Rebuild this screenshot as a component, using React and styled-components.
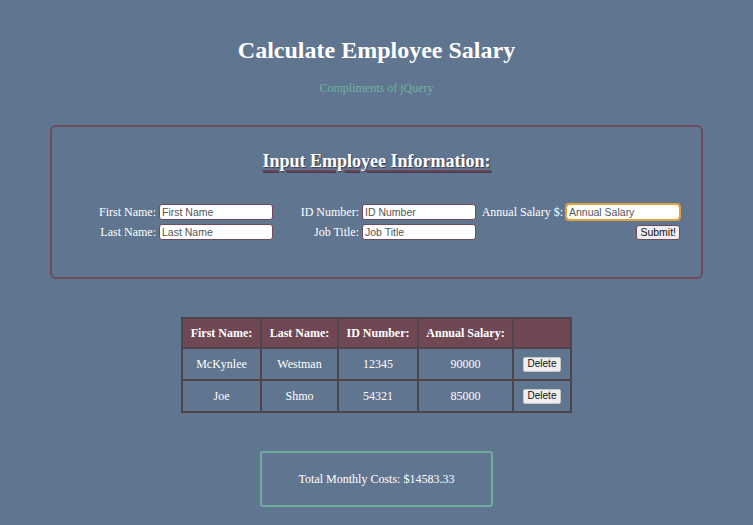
import { useState } from "react";
import styled, { createGlobalStyle } from "styled-components";

const GlobalStyle = createGlobalStyle`
  html, body {
    margin: 0;
    padding: 0;
    background: #5f7590;
  }
  body {
    font-family: "Liberation Serif", "Times New Roman", serif;
    color: #ffffff;
  }
`;

const Page = styled.div`
  width: 753px;
  min-height: 525px;
  padding-top: 36px;
  box-sizing: border-box;
`;

const Title = styled.h1`
  margin: 0;
  text-align: center;
  font-size: 24px;
  line-height: 28px;
  font-weight: bold;
`;

const Subtitle = styled.p`
  margin: 17px 0 0;
  text-align: center;
  font-size: 12px;
  color: #6fb3a1;
`;

const InputBox = styled.div`
  margin: 29px 50px 0;
  height: 154px;
  border: 2px solid #6d4b5d;
  border-radius: 6px;
  box-sizing: border-box;
  padding: 22px 20px 0 43px;
`;

const BoxHeading = styled.h3`
  margin: 0 0 0 -23px;
  text-align: center;
  font-size: 18px;
  line-height: 24px;
  text-decoration: underline;
  text-decoration-color: #6d4355;
  text-decoration-thickness: 2px;
  text-underline-offset: 3px;
  text-shadow: 1px 1px 1px #3e3d4d;
`;

const FieldGrid = styled.div`
  margin-top: 31px;
  display: grid;
  grid-template-columns: 61px 114px 83px 114px 84px 114px;
  column-gap: 3px;
  row-gap: 4px;
  align-items: center;
`;

const Label = styled.label`
  font-size: 12px;
  text-align: right;
  white-space: nowrap;
`;

const TextInput = styled.input`
  width: 114px;
  height: 16px;
  box-sizing: border-box;
  border: 1.5px solid #6d4b5d;
  border-radius: 3px;
  padding: 0 2px;
  font-family: "Liberation Sans", Arial, sans-serif;
  font-size: 10.5px;
  color: #222;
  background: #fff;
  outline: ${(p) => (p.$focused ? "2px solid #e0a03c" : "none")};
  outline-offset: -1px;
  &::placeholder {
    color: #555;
  }
`;

const SubmitButton = styled.button`
  justify-self: end;
  height: 15px;
  padding: 0 3px;
  box-sizing: border-box;
  border: 1.5px solid #6d4b5d;
  border-radius: 3px;
  background: #eeeeee;
  font-family: "Liberation Sans", Arial, sans-serif;
  font-size: 10.5px;
  line-height: 11px;
  color: #111;
`;

const TableWrap = styled.div`
  margin-top: 38px;
  display: flex;
  justify-content: center;
`;

const Table = styled.table`
  border-collapse: collapse;
  border: 2px solid #4d4549;
  font-size: 12px;
`;

const HeadCell = styled.th`
  background: #6f4854;
  border: 2px solid #4d4549;
  height: 30px;
  padding: 0 4px;
  font-weight: bold;
  white-space: nowrap;
  width: ${(p) => p.$w}px;
  box-sizing: border-box;
`;

const Cell = styled.td`
  border: 2px solid #4d4549;
  height: 30px;
  padding: 0 4px;
  text-align: center;
`;

const DeleteButton = styled.button`
  height: 15px;
  padding: 0 4px;
  border: 1px solid #c8c8c8;
  border-radius: 2px;
  background: #eeeeee;
  font-family: "Liberation Sans", Arial, sans-serif;
  font-size: 10px;
  line-height: 12px;
  color: #111;
`;

const TotalWrap = styled.div`
  margin-top: 38px;
  display: flex;
  justify-content: center;
`;

const TotalBox = styled.div`
  width: 233px;
  height: 56px;
  box-sizing: border-box;
  border: 2px solid #70ad9e;
  border-radius: 3px;
  display: flex;
  align-items: center;
  justify-content: center;
  font-size: 12px;
`;

const employees = [
  { first: "McKynlee", last: "Westman", id: "12345", salary: 90000 },
  { first: "Joe", last: "Shmo", id: "54321", salary: 85000 },
];

export default function App() {
  const [rows, setRows] = useState(employees);
  const total = rows.reduce((sum, r) => sum + r.salary, 0) / 12;

  return (
    <Page>
      <GlobalStyle />
      <Title>Calculate Employee Salary</Title>
      <Subtitle>Compliments of jQuery</Subtitle>

      <InputBox>
        <BoxHeading>Input Employee Information:</BoxHeading>
        <FieldGrid>
          <Label>First Name:</Label>
          <TextInput placeholder="First Name" />
          <Label>ID Number:</Label>
          <TextInput placeholder="ID Number" />
          <Label>Annual Salary $:</Label>
          <TextInput placeholder="Annual Salary" $focused />
          <Label>Last Name:</Label>
          <TextInput placeholder="Last Name" />
          <Label>Job Title:</Label>
          <TextInput placeholder="Job Title" />
          <span />
          <SubmitButton>Submit!</SubmitButton>
        </FieldGrid>
      </InputBox>

      <TableWrap>
        <Table>
          <thead>
            <tr>
              <HeadCell $w={79}>First Name:</HeadCell>
              <HeadCell $w={77}>Last Name:</HeadCell>
              <HeadCell $w={80}>ID Number:</HeadCell>
              <HeadCell $w={95}>Annual Salary:</HeadCell>
              <HeadCell $w={58}></HeadCell>
            </tr>
          </thead>
          <tbody>
            {rows.map((r) => (
              <tr key={r.id}>
                <Cell>{r.first}</Cell>
                <Cell>{r.last}</Cell>
                <Cell>{r.id}</Cell>
                <Cell>{r.salary}</Cell>
                <Cell>
                  <DeleteButton onClick={() => setRows(rows.filter((x) => x.id !== r.id))}>
                    Delete
                  </DeleteButton>
                </Cell>
              </tr>
            ))}
          </tbody>
        </Table>
      </TableWrap>

      <TotalWrap>
        <TotalBox>Total Monthly Costs: ${total.toFixed(2)}</TotalBox>
      </TotalWrap>
    </Page>
  );
}
